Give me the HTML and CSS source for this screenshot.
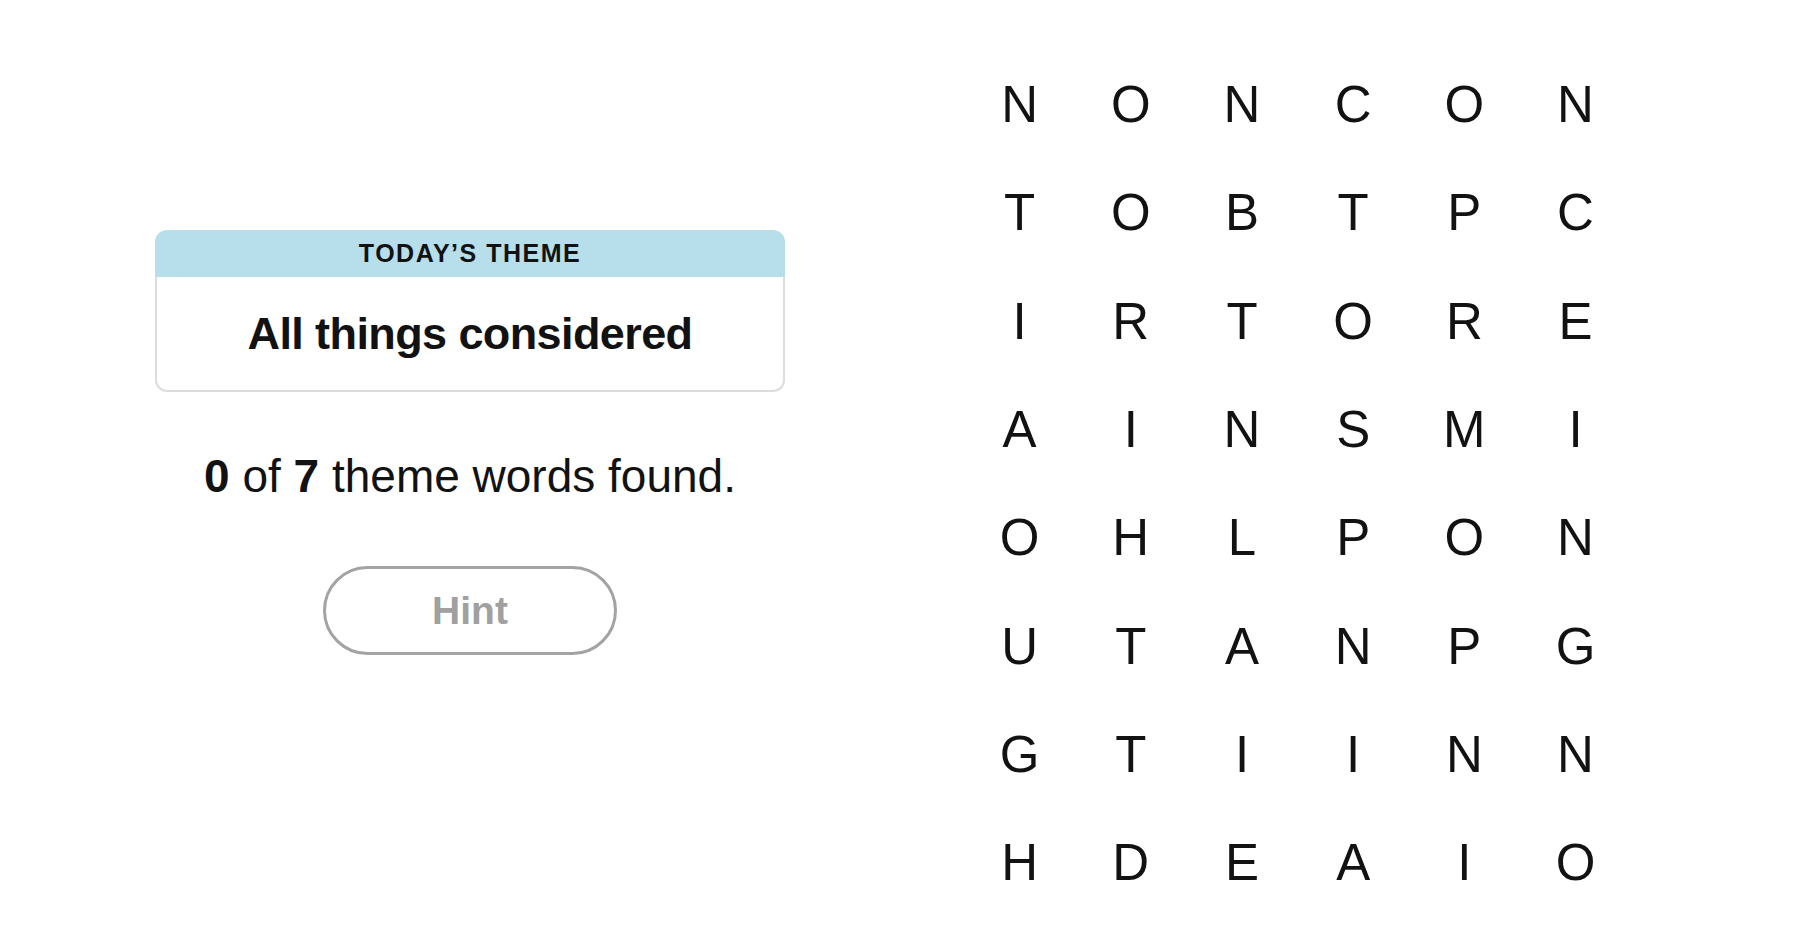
FILE: index.html
```html
<!DOCTYPE html>
<html lang="en">
<head>
<meta charset="utf-8">
<title>Strands</title>
<link rel="stylesheet" href="styles.css">
</head>
<body>
<main class="game">
  <section class="side">
    <div class="theme-card">
      <div class="theme-head">TODAY’S THEME</div>
      <div class="theme-body">All things considered</div>
    </div>
    <p class="progress"><b>0</b> of <b>7</b> theme words found.</p>
    <button class="hint" type="button">Hint</button>
  </section>
  <section class="board">
    <span>N</span><span>O</span><span>N</span><span>C</span><span>O</span><span>N</span>
    <span>T</span><span>O</span><span>B</span><span>T</span><span>P</span><span>C</span>
    <span>I</span><span>R</span><span>T</span><span>O</span><span>R</span><span>E</span>
    <span>A</span><span>I</span><span>N</span><span>S</span><span>M</span><span>I</span>
    <span>O</span><span>H</span><span>L</span><span>P</span><span>O</span><span>N</span>
    <span>U</span><span>T</span><span>A</span><span>N</span><span>P</span><span>G</span>
    <span>G</span><span>T</span><span>I</span><span>I</span><span>N</span><span>N</span>
    <span>H</span><span>D</span><span>E</span><span>A</span><span>I</span><span>O</span>
  </section>
</main>
</body>
</html>
```

FILE: styles.css
```css
html, body {
  margin: 0;
  padding: 0;
  background: #ffffff;
}

body {
  width: 1800px;
  height: 950px;
  overflow: hidden;
  font-family: "Liberation Sans", Arial, sans-serif;
  color: #121212;
}

.game {
  display: flex;
  align-items: flex-start;
  padding-left: 155px;
}

.side {
  width: 630px;
  display: flex;
  flex-direction: column;
  align-items: center;
  padding-top: 230px;
}

.theme-card {
  width: 630px;
  display: flex;
  flex-direction: column;
}

.theme-head {
  height: 47px;
  background: #b7deeb;
  border-radius: 12px 12px 0 0;
  display: flex;
  align-items: center;
  justify-content: center;
  font-size: 25px;
  font-weight: 700;
  letter-spacing: 1.5px;
  color: #121212;
}

.theme-body {
  height: 113px;
  border: 2px solid #dcdcdc;
  border-top: none;
  border-radius: 0 0 12px 12px;
  display: flex;
  align-items: center;
  justify-content: center;
  font-size: 45px;
  font-weight: 700;
  letter-spacing: -0.6px;
}

.progress {
  margin: 57px 0 0;
  font-size: 46px;
  line-height: 1.2;
  white-space: nowrap;
}

.progress b {
  font-weight: 700;
}

.hint {
  margin-top: 62px;
  width: 294px;
  height: 89px;
  border: 3px solid #a3a3a3;
  border-radius: 45px;
  background: #ffffff;
  font-family: "Liberation Sans", Arial, sans-serif;
  font-size: 39px;
  font-weight: 700;
  color: #a0a0a0;
  padding: 0;
}

.board {
  margin-left: 179px;
  margin-top: 51px;
  display: grid;
  grid-template-columns: repeat(6, 111.2px);
  grid-auto-rows: 108.3px;
}

.board span {
  display: flex;
  align-items: center;
  justify-content: center;
  font-size: 51px;
  line-height: 108px;
  color: #121212;
}
```
